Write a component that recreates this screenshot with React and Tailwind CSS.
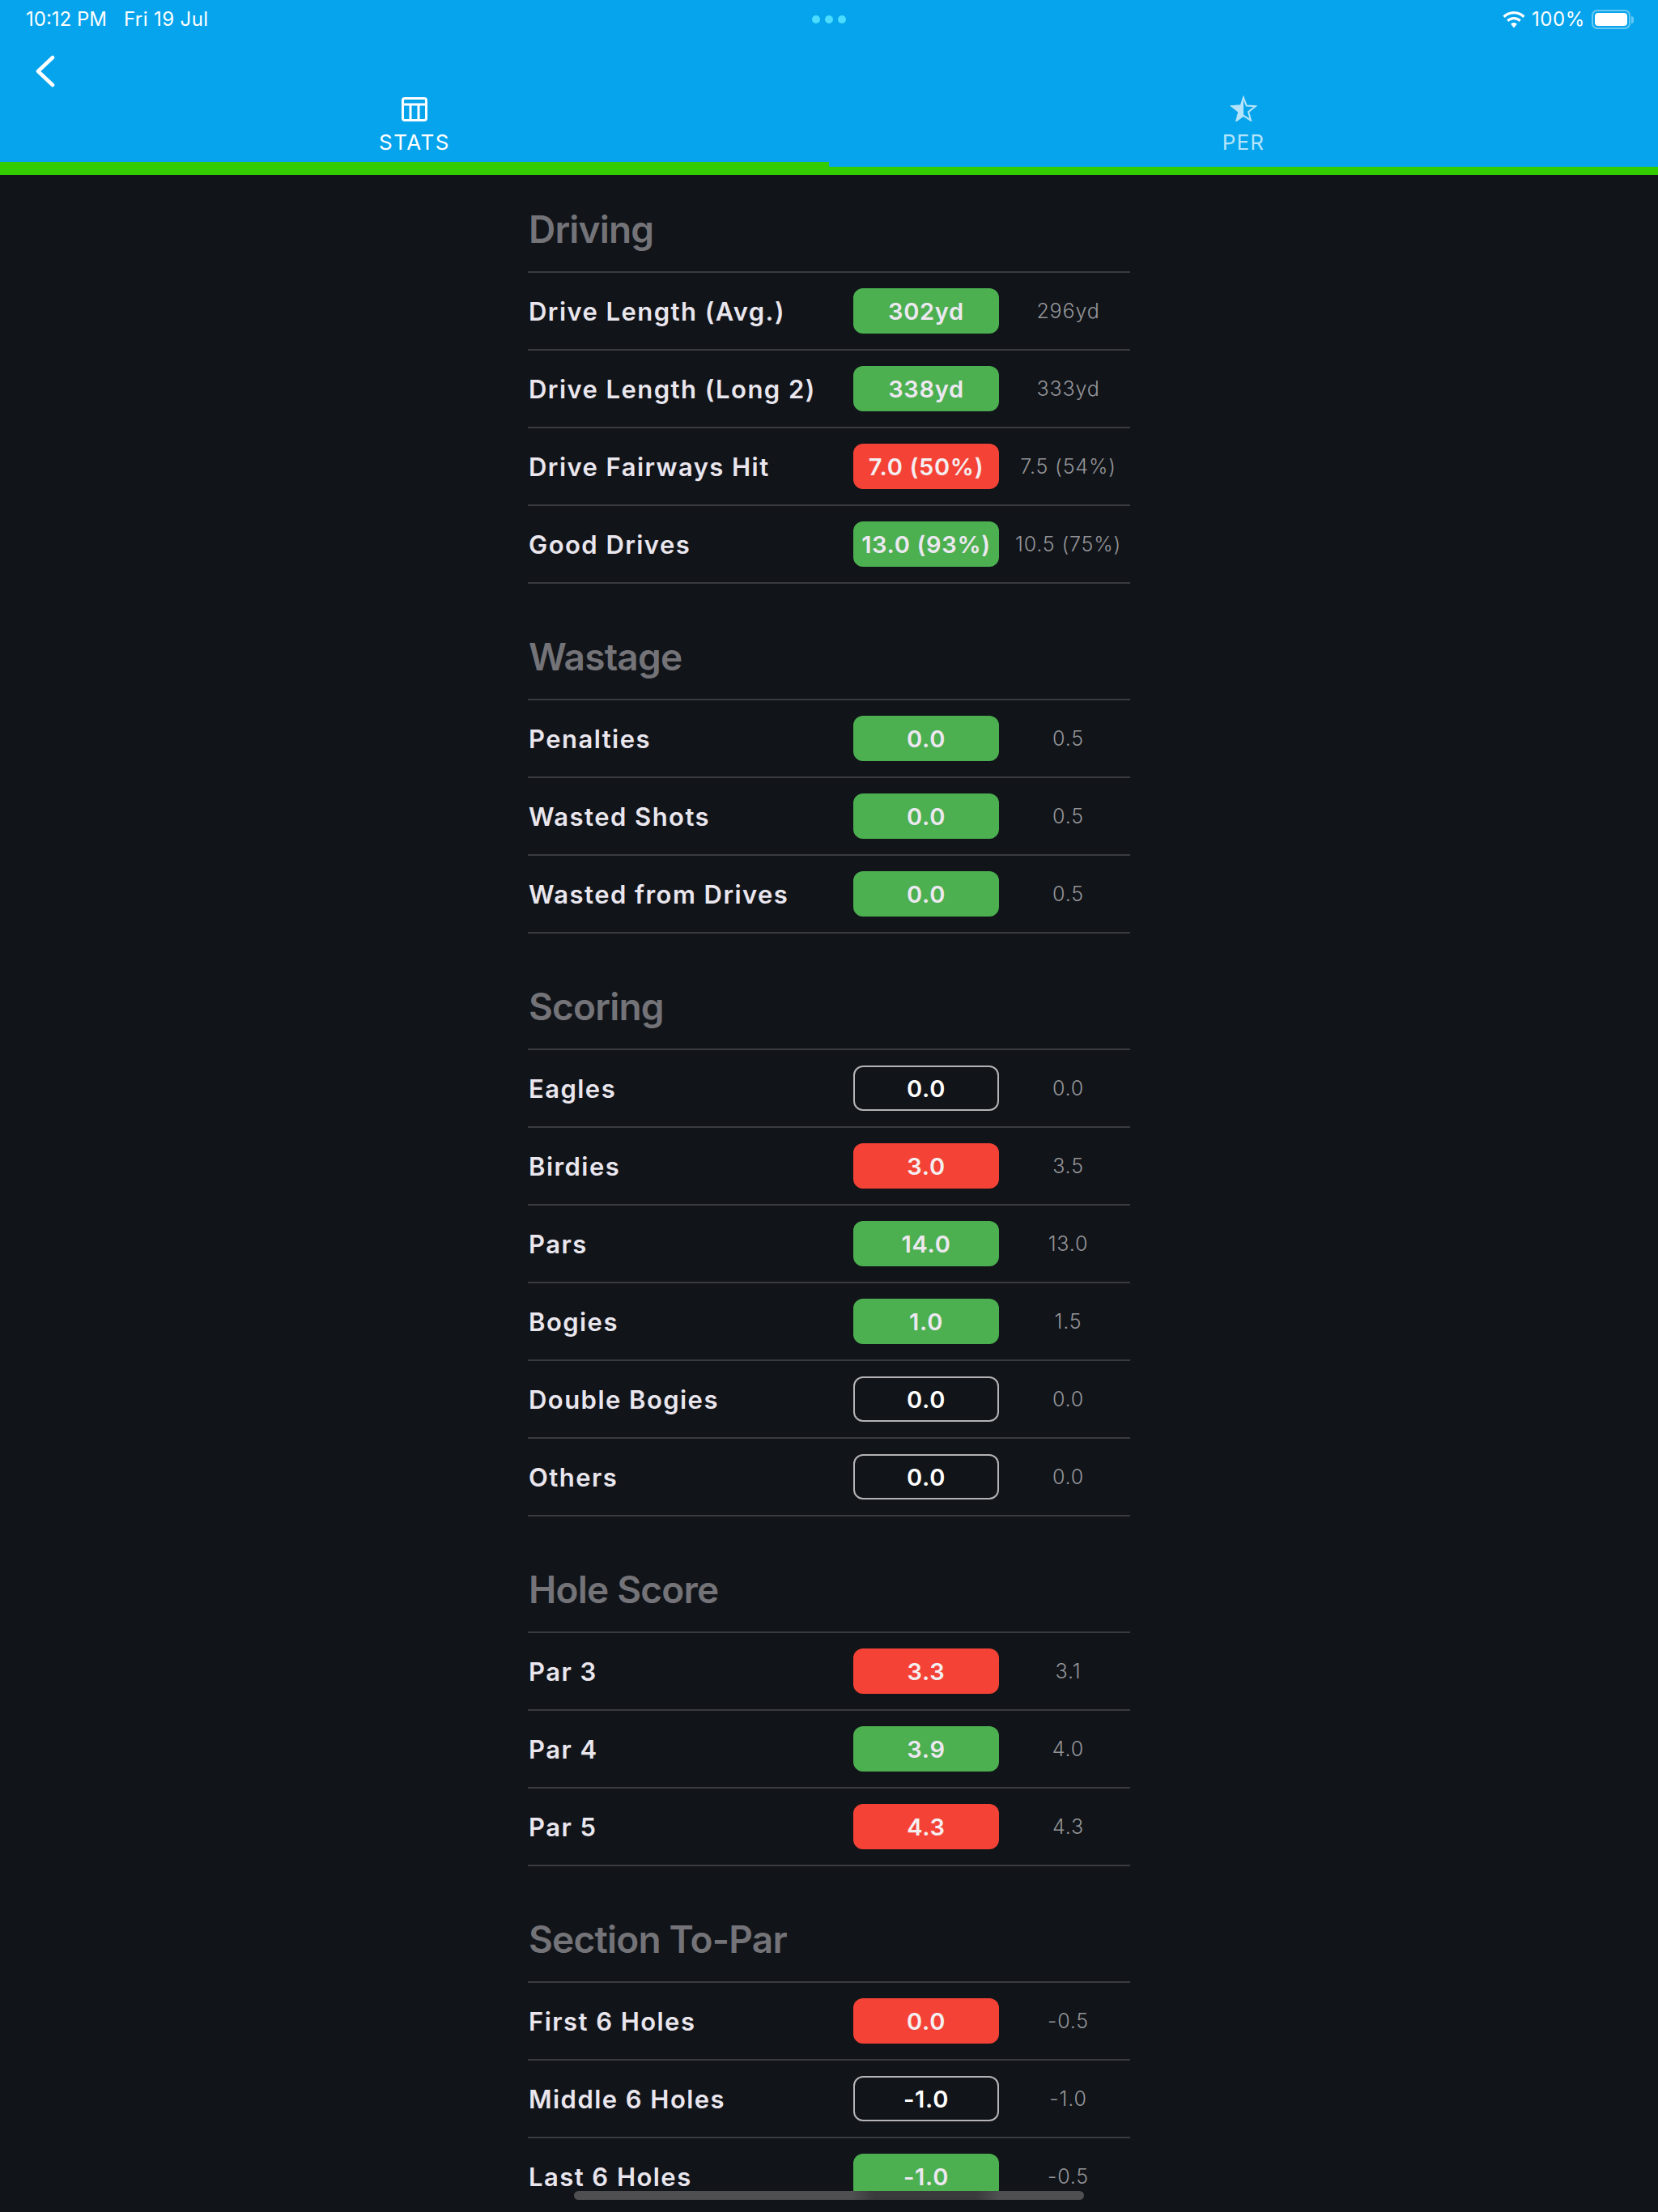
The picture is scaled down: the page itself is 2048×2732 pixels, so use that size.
import React from "react";

const sections = [
  {
    title: "Driving",
    rows: [
      ["Drive Length (Avg.)", "302yd", "296yd", "green"],
      ["Drive Length (Long 2)", "338yd", "333yd", "green"],
      ["Drive Fairways Hit", "7.0 (50%)", "7.5 (54%)", "red"],
      ["Good Drives", "13.0 (93%)", "10.5 (75%)", "green"],
    ],
  },
  {
    title: "Wastage",
    rows: [
      ["Penalties", "0.0", "0.5", "green"],
      ["Wasted Shots", "0.0", "0.5", "green"],
      ["Wasted from Drives", "0.0", "0.5", "green"],
    ],
  },
  {
    title: "Scoring",
    rows: [
      ["Eagles", "0.0", "0.0", "none"],
      ["Birdies", "3.0", "3.5", "red"],
      ["Pars", "14.0", "13.0", "green"],
      ["Bogies", "1.0", "1.5", "green"],
      ["Double Bogies", "0.0", "0.0", "none"],
      ["Others", "0.0", "0.0", "none"],
    ],
  },
  {
    title: "Hole Score",
    rows: [
      ["Par 3", "3.3", "3.1", "red"],
      ["Par 4", "3.9", "4.0", "green"],
      ["Par 5", "4.3", "4.3", "red"],
    ],
  },
  {
    title: "Section To-Par",
    rows: [
      ["First 6 Holes", "0.0", "-0.5", "red"],
      ["Middle 6 Holes", "-1.0", "-1.0", "none"],
      ["Last 6 Holes", "-1.0", "-0.5", "green"],
    ],
  },
];

const badgeStyles = {
  green: "bg-[#4caf50] text-[#ece8f0]",
  red: "bg-[#f44336] text-[#f5eef0]",
  none: "border-2 border-[#b4b4b6] text-white",
};

const StatRow = ({ label, value, avg, tone }) => (
  <div className="flex h-[96px] items-center border-b-2 border-[#3a3b40]">
    <div className="w-[402px] pt-[2px] pl-[1px] text-[31px] font-semibold tracking-[1.45px] text-[#e9e6ee]">
      {label}
    </div>
    <div
      className={`flex h-[56px] w-[180px] items-center justify-center rounded-[12px] pt-[2px] text-[29px] font-semibold tracking-[0.7px] whitespace-nowrap ${badgeStyles[tone]}`}
    >
      {value}
    </div>
    <div className="ml-[9px] flex w-[153px] justify-center pt-[2px] text-[25px] font-light tracking-[0.85px] whitespace-nowrap text-[#949498]">
      {avg}
    </div>
  </div>
);

const Section = ({ title, rows }) => (
  <section className="mb-[23px]">
    <div className="flex h-[121px] items-center border-b-2 border-[#3a3b40] pt-[16px] pl-[1px] text-[46px] font-semibold tracking-[-0.8px] text-[#737378]">
      {title}
    </div>
    {rows.map((r) => (
      <StatRow key={r[0]} label={r[0]} value={r[1]} avg={r[2]} tone={r[3]} />
    ))}
  </section>
);

const TableIcon = () => (
  <svg width="32" height="30" viewBox="0 0 32 30" fill="none" stroke="currentColor" strokeWidth="3">
    <rect x="1.500" y="1.500" width="29" height="27" rx="2.500" />
    <path d="M1 9h30M11 9v20M21 9v20" />
  </svg>
);

const HalfStar = () => (
  <svg className="-mt-[2px]" width="34" height="32" viewBox="0 0 34 32">
    <path
      d="M17 2.500l3.700 10 11 .7-8.600 6.900 2.900 10.600L17 24.800 8.900 30.700l2.900-10.600-8.600-6.900 11-.7z"
      fill="none"
      stroke="currentColor"
      strokeWidth="2"
    />
    <path d="M17 0l-4 11.500-13 .9 10.200 8L7 32l10-7z" fill="currentColor" />
  </svg>
);

const Wifi = () => (
  <svg width="28" height="21" viewBox="0 0 28 21" fill="white">
    <path d="M14 0C8.700 0 3.900 2.100.4 5.500l2.300 2.400C5.600 5 9.600 3.300 14 3.300S22.400 5 25.300 7.900l2.300-2.400C24.100 2.100 19.300 0 14 0z" />
    <path d="M14 7c-3.400 0-6.500 1.300-8.800 3.500l2.300 2.400C9.200 11.300 11.500 10.300 14 10.300s4.800 1 6.500 2.600l2.300-2.400C20.500 8.300 17.400 7 14 7z" />
    <path d="M14 14c-1.500 0-2.900.6-3.900 1.600L14 20.500l3.900-4.900c-1-1-2.400-1.600-3.900-1.600z" />
  </svg>
);

export default function App() {
  return (
    <div className="relative h-[2732px] w-[2048px] overflow-hidden bg-[#111419] font-['Inter',sans-serif]">
      {/* HEADER */}
      <header className="relative h-[216px] bg-[#06a4ec] text-white">
        <div className="flex h-[48px] items-center justify-between pr-[30px] pl-[32px] text-[24px]">
          <div className="flex gap-[21px]">
            <span>10:12 PM</span>
            <span className="tracking-[0.4px]">Fri 19 Jul</span>
          </div>
          <div className="flex items-center gap-[8px]">
            <Wifi />
            <span className="tracking-[0.6px]">100%</span>
            <div className="flex items-center">
              <div className="h-[24px] w-[48px] rounded-[7px] border-2 border-white/40 p-[2px]">
                <div className="h-full w-full rounded-[4px] bg-white" />
              </div>
              <div className="ml-[1px] h-[9px] w-[3px] rounded-r-full bg-white/40" />
            </div>
          </div>
        </div>
        <div className="absolute top-[19px] left-[1003px] flex gap-[6px]">
          <span className="h-[10px] w-[10px] rounded-full bg-[#4bdcff]" />
          <span className="h-[10px] w-[10px] rounded-full bg-[#4bdcff]" />
          <span className="h-[10px] w-[10px] rounded-full bg-[#4bdcff]" />
        </div>
        <div className="pl-[44px]">
          <svg className="mt-[20px]" width="26" height="42" viewBox="0 0 26 42" fill="none" stroke="white" strokeWidth="4.500" strokeLinecap="round" strokeLinejoin="round">
            <path d="M21 3L3 20l18 17" />
          </svg>
        </div>
        <div className="absolute right-0 bottom-0 left-0 flex h-[96px]">
          <div className="flex w-1/2 flex-col items-center border-b-[16px] border-[#33cc00]">
            <TableIcon />
            <span className="mt-[13px] text-[26px] leading-[26px] tracking-[1.5px]">STATS</span>
          </div>
          <div className="flex w-1/2 flex-col items-center border-b-[10px] border-[#33cc00] text-[#b5e4fa]">
            <HalfStar />
            <span className="mt-[13px] text-[26px] leading-[26px] tracking-[1.2px]">PER</span>
          </div>
        </div>
      </header>

      {/* BODY */}
      <main className="mx-auto w-[744px]">
        {sections.map((s) => (
          <Section key={s.title} title={s.title} rows={s.rows} />
        ))}
      </main>

      {/* home indicator */}
      <div className="absolute bottom-[15px] left-[709px] h-[11px] w-[630px] overflow-hidden rounded-full bg-[#4f4f51]">
        <div className="absolute top-0 left-[344px] h-full w-[180px] bg-[linear-gradient(90deg,#4f4f51_0%,#3a3a3c_15%,#3a3a3c_85%,#4f4f51_100%)]" />
      </div>
    </div>
  );
}
